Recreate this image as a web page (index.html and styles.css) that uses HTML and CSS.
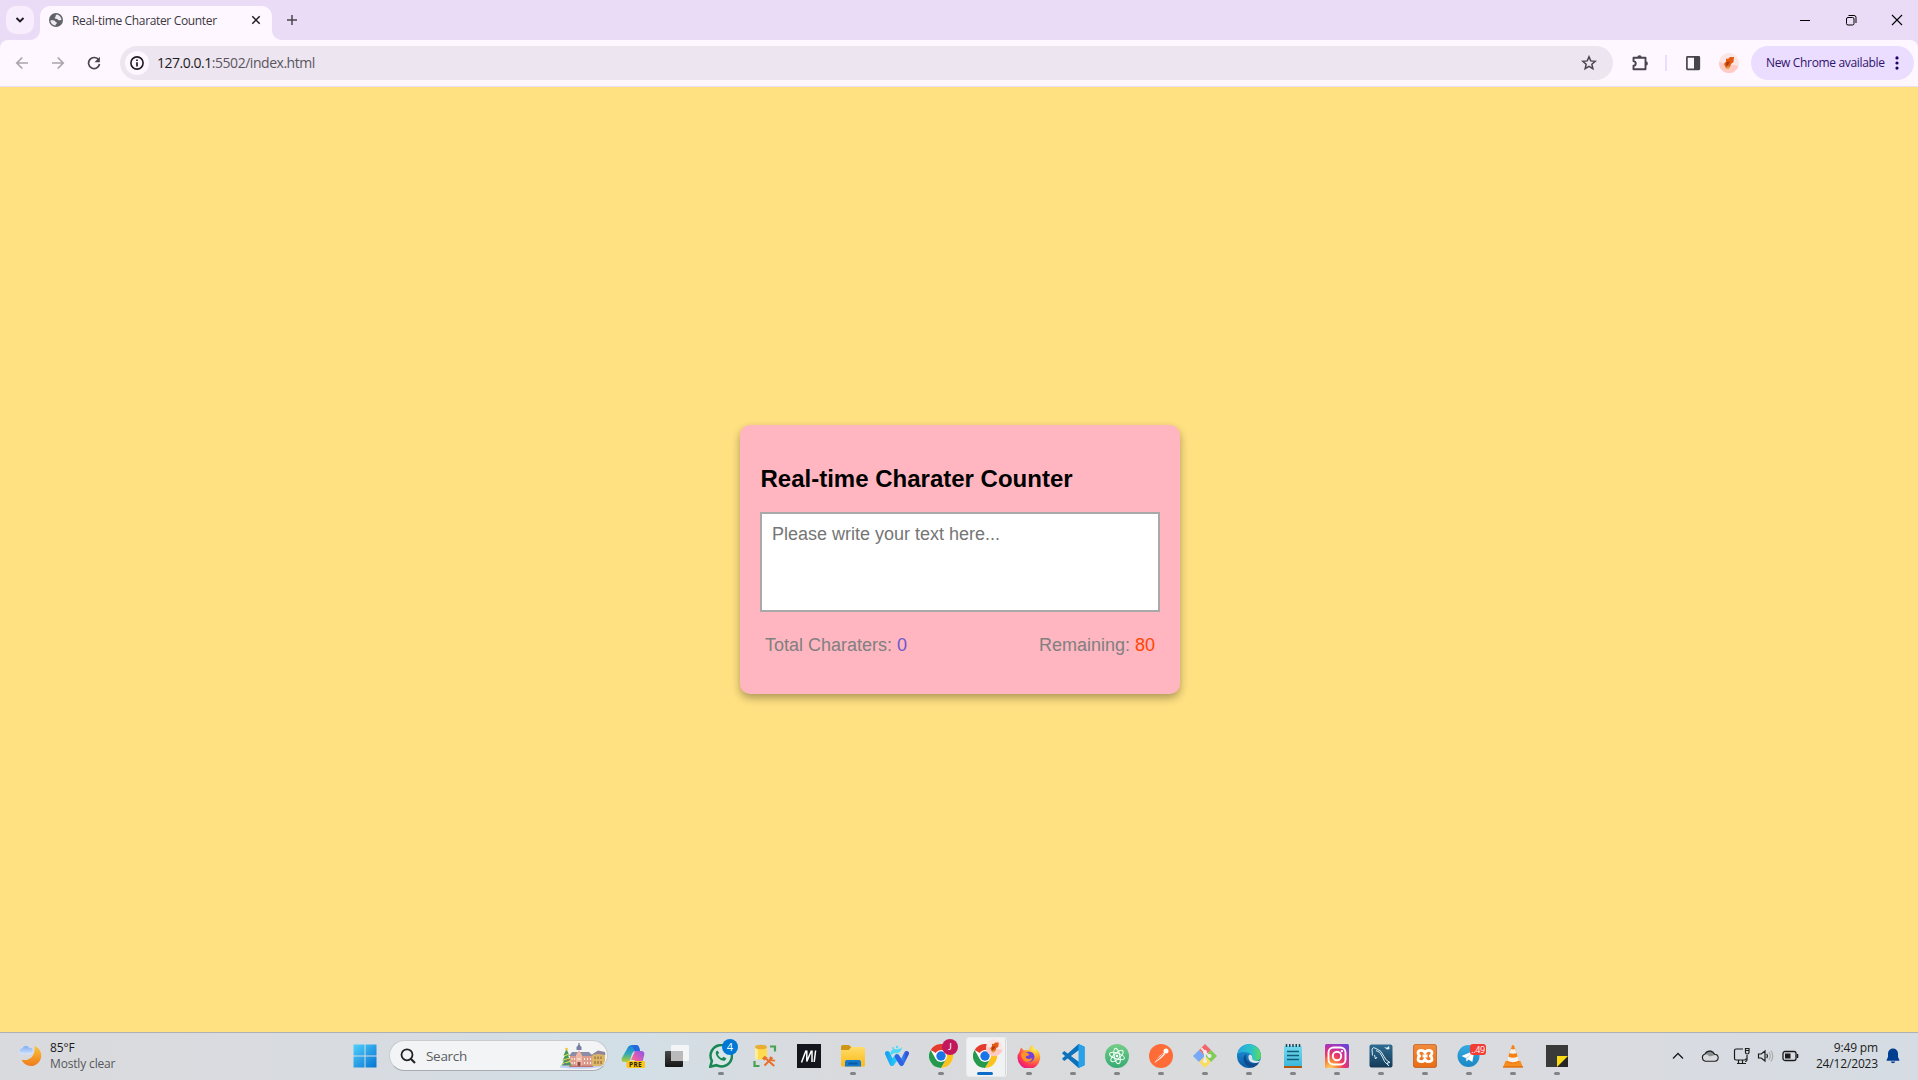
FILE: index.html
```html
<!DOCTYPE html>
<html lang="en">
<head>
<meta charset="utf-8">
<title>Real-time Charater Counter</title>
<link rel="stylesheet" href="styles.css">
</head>
<body>
<svg width="0" height="0" class="defs" aria-hidden="true">
  <defs>
    <linearGradient id="moon" x1="0" y1="0" x2="0" y2="1"><stop offset="0" stop-color="#fcc33c"/><stop offset="1" stop-color="#ee7b1b"/></linearGradient>
    <linearGradient id="cloud" x1="0" y1="0" x2="0" y2="1"><stop offset="0" stop-color="#7fa8ee"/><stop offset="1" stop-color="#cfe2fd"/></linearGradient>
    <linearGradient id="win" x1="0" y1="0" x2="1" y2="1"><stop offset="0" stop-color="#4fd0fb"/><stop offset="1" stop-color="#0673d3"/></linearGradient>
    <linearGradient id="cop1" x1="0" y1="0" x2="0" y2="1"><stop offset="0" stop-color="#1a7fe8"/><stop offset=".5" stop-color="#2fa9b4"/><stop offset="1" stop-color="#b8cf2c"/></linearGradient>
    <linearGradient id="cop2" x1="1" y1="0" x2="0" y2="1"><stop offset="0" stop-color="#8b55e8"/><stop offset=".6" stop-color="#e55fae"/><stop offset="1" stop-color="#fb8f50"/></linearGradient>
    <linearGradient id="dark" x1="0" y1="0" x2="0" y2="1"><stop offset="0" stop-color="#4a4a4a"/><stop offset="1" stop-color="#161616"/></linearGradient>
    <linearGradient id="folder" x1="0" y1="0" x2="0" y2="1"><stop offset="0" stop-color="#ffdc6a"/><stop offset="1" stop-color="#fbb917"/></linearGradient>
    <linearGradient id="wave" x1="0" y1="0" x2="1" y2="0"><stop offset="0" stop-color="#13a5f6"/><stop offset=".5" stop-color="#2ed0f4"/><stop offset="1" stop-color="#3353de"/></linearGradient>
    <radialGradient id="fox" cx=".75" cy=".15" r=".95"><stop offset="0" stop-color="#fff44f"/><stop offset=".4" stop-color="#ffa42b"/><stop offset=".75" stop-color="#ff3b50"/><stop offset="1" stop-color="#e31587"/></radialGradient>
    <linearGradient id="atom" x1="0" y1="0" x2="0" y2="1"><stop offset="0" stop-color="#74cd86"/><stop offset="1" stop-color="#35ab74"/></linearGradient>
    <linearGradient id="edge1" x1="0" y1="0" x2="1" y2="0"><stop offset="0" stop-color="#25a7e0"/><stop offset=".6" stop-color="#2cc3c8"/><stop offset="1" stop-color="#5fdc55"/></linearGradient>
    <linearGradient id="edge2" x1="0" y1="0" x2="0" y2="1"><stop offset="0" stop-color="#1f9de0"/><stop offset="1" stop-color="#0c59a4"/></linearGradient>
    <linearGradient id="note" x1="0" y1="0" x2="0" y2="1"><stop offset="0" stop-color="#75d9ee"/><stop offset="1" stop-color="#3db9dc"/></linearGradient>
    <radialGradient id="insta" cx=".2" cy="1" r="1.15"><stop offset="0" stop-color="#ffd566"/><stop offset=".25" stop-color="#fb8a3a"/><stop offset=".5" stop-color="#ea3a64"/><stop offset=".75" stop-color="#c32fa7"/><stop offset="1" stop-color="#6a45d8"/></radialGradient>
    <linearGradient id="sql" x1="0" y1="0" x2="0" y2="1"><stop offset="0" stop-color="#2f6d93"/><stop offset="1" stop-color="#163a58"/></linearGradient>
    <linearGradient id="xam" x1="0" y1="0" x2="0" y2="1"><stop offset="0" stop-color="#f18a3c"/><stop offset="1" stop-color="#ea6c14"/></linearGradient>
    <linearGradient id="tel" x1="0" y1="0" x2="0" y2="1"><stop offset="0" stop-color="#34aadf"/><stop offset="1" stop-color="#1b87c4"/></linearGradient>
    <symbol id="chrome" viewBox="0 0 24 24">
      <circle cx="12" cy="12" r="12" fill="#fff"/>
      <path d="M12 12 1.6 6A12 12 0 0 1 22.4 6H12z" fill="#e33b2e"/>
      <path d="M22.4 6A12 12 0 0 1 12 24l5.2-9L12 6z" fill="#fcc31e"/>
      <path d="M1.6 6A12 12 0 0 0 12 24l5.2-9L12 12 6.8 15z" fill="#269a4c"/>
      <circle cx="12" cy="12" r="6" fill="#fff"/><circle cx="12" cy="12" r="4.700" fill="#1b73e8"/>
    </symbol>
    <symbol id="avatar" viewBox="0 0 20 20">
      <circle cx="10" cy="10" r="10" fill="#fbe6e6"/>
      <path d="M0 9Q4 10 9 11l10.500 2A10 10 0 0 1 0 9z" fill="#ffc9c4"/>
      <path d="M7 5.500 9 6l2-2h4l-.5 5-2.500 2-1 3-4 1-2-4 2-2.500z" fill="#e55b13"/>
      <path d="m7.500 9 3.500-.5-2 3.500-2 1z" fill="#a83a0c"/><path d="m9 13 2 1-1.500 2-3-.5z" fill="#d9a23a"/>
    </symbol>
  </defs>
</svg>

<div class="screen">
  <header class="tabstrip">
    <div class="tab-search"><svg width="10" height="10" viewBox="0 0 10 10"><path d="m1.500 3 3.500 3.500L8.500 3" fill="none" stroke="#1d1b20" stroke-width="1.900"/></svg></div>
    <div class="tab">
      <svg width="14" height="14" viewBox="0 0 14 14"><circle cx="7" cy="7" r="7" fill="#5f6368"/><path d="M8.200 1.500C5.800 2 7.200 3.800 6 4.600c-1 .8.8 1.600 2.600 1.600.9 1.700 2.200.9 3.900.7-.2-2.600-2-4.800-4.300-5.400z" fill="#f1eaf3"/><path d="M1.400 7.200c2 0 4.100-.3 4.900 1.200.2 1.200 1.600.4 1.700 1.700-.7 1-1.600 1.200-1.500 2.500C3.600 12.300 1.500 10 1.400 7.200z" fill="#f1eaf3"/></svg>
      <span class="tab-title">Real-time Charater Counter</span>
      <svg class="tab-close" width="10" height="10" viewBox="0 0 10 10"><path d="m1.300 1.300 7.400 7.400m0-7.400L1.300 8.700" stroke="#1d1b20" stroke-width="1.500"/></svg>
    </div>
    <svg class="new-tab" width="12" height="12" viewBox="0 0 12 12"><path d="M6 1v10M1 6h10" stroke="#49454f" stroke-width="1.500"/></svg>
    <div class="window-controls">
      <svg width="12" height="12" viewBox="0 0 12 12"><path d="M1 6.500h10" stroke="#000"/></svg>
      <svg width="12" height="12" viewBox="0 0 12 12"><rect x="1.500" y="3.500" width="7.500" height="7.500" rx="1.500" fill="none" stroke="#000"/><path d="M3.500 1.500H9a2 2 0 0 1 2 2V9" fill="none" stroke="#000"/></svg>
      <svg width="12" height="12" viewBox="0 0 12 12"><path d="m1 1 10 10m0-10L1 11" stroke="#000" stroke-width="1.100"/></svg>
    </div>
  </header>

  <nav class="toolbar">
    <svg class="nav" width="14" height="14" viewBox="0 0 14 14"><path d="M13 7H2m5.300-5.500L1.800 7l5.500 5.500" fill="none" stroke="#aaa3ae" stroke-width="1.700"/></svg>
    <svg class="nav" width="14" height="14" viewBox="0 0 14 14"><path d="M1 7h11M6.700 1.500 12.200 7l-5.500 5.500" fill="none" stroke="#aaa3ae" stroke-width="1.700"/></svg>
    <svg class="nav" width="14" height="14" viewBox="0 0 14 14"><path d="M11.700 4A5.500 5.500 0 1 0 12.500 8" fill="none" stroke="#49454f" stroke-width="1.700"/><path d="M12.900.8v5.400H7.500z" fill="#49454f"/></svg>
    <div class="omnibox">
      <span class="site-info"><svg width="14" height="14" viewBox="0 0 14 14"><circle cx="7" cy="7" r="6.100" fill="none" stroke="#1d1b20" stroke-width="1.600"/><path d="M7 6.200v4.200M7 3.400V5" stroke="#1d1b20" stroke-width="1.700"/></svg></span>
      <span class="url"><b>127.0.0.1</b>:5502/index.html</span>
      <svg class="star" width="16" height="16" viewBox="0 0 16 16"><path d="m8 1.800 1.750 4.100 4.450.4-3.350 2.900 1 4.400L8 11.300l-3.850 2.300 1-4.400L1.800 6.300l4.450-.4z" fill="none" stroke="#49454f" stroke-width="1.500"/></svg>
    </div>
    <svg class="ext" width="18" height="18" viewBox="0 0 18 18"><path d="M2.500 3.700h12V15.200h-12v-3.400c3-.6 3-4.200 0-4.700z" fill="none" stroke="#49454f" stroke-width="1.900" stroke-linejoin="round"/><path d="M6.300 3.500a2.200 2.200 0 0 1 4.400 0zM14.700 7.200a2.200 2.200 0 0 1 0 4.400z" fill="#49454f"/></svg>
    <i class="divider"></i>
    <svg class="panel" width="16" height="16" viewBox="0 0 16 16"><rect x="1.900" y="1.900" width="12.400" height="12.400" rx=".6" fill="none" stroke="#49454f" stroke-width="1.700"/><path d="M9 1.500h5.500v13H9z" fill="#49454f"/></svg>
    <svg class="profile" width="20" height="20"><use href="#avatar"/></svg>
    <div class="update"><span>New Chrome available</span><svg width="4" height="14" viewBox="0 0 4 14"><g fill="#21005d"><circle cx="2" cy="1.900" r="1.600"/><circle cx="2" cy="7" r="1.600"/><circle cx="2" cy="12.100" r="1.600"/></g></svg></div>
  </nav>

  <main class="page">
    <section class="container">
      <h2>Real-time Charater Counter</h2>
      <textarea class="textarea" placeholder="Please write your text here..." maxlength="80"></textarea>
      <div class="counter-container">
        <p>Total Charaters: <span class="total-counter">0</span></p>
        <p>Remaining: <span class="remaining-counter">80</span></p>
      </div>
    </section>
  </main>

  <footer class="taskbar">
    <div class="weather">
      <svg width="25" height="24" viewBox="0 0 25 24"><path d="M16.500 2A10.300 10.300 0 1 1 3.500 15.800Q10 17 13.800 13 17.300 9 16.500 2z" fill="url(#moon)"/><path d="M4 10a3 3 0 0 1 .2-6 4 4 0 0 1 7-.6 3.300 3.300 0 0 1 1.300 6.600z" fill="url(#cloud)" stroke="#dbe7fb" stroke-width=".6"/></svg>
      <div class="weather-text"><span>85°F</span><small>Mostly clear</small></div>
    </div>

    <div class="apps">
      <div class="app start"><svg width="24" height="24" viewBox="0 0 24 24"><path d="M.5.500h11v11H.5zm12 0h11v11h-11zM.5 12.500h11v11H.5zm12 0h11v11h-11z" fill="url(#win)"/></svg></div>
      <div class="search">
        <svg width="16" height="16" viewBox="0 0 16 16"><circle cx="7" cy="6.800" r="5.500" fill="none" stroke="#222" stroke-width="1.800"/><path d="m11 11 4 4" stroke="#222" stroke-width="2.100"/></svg>
        <span>Search</span>
        <svg class="town" width="46" height="26" viewBox="0 0 46 26">
          <path d="M0 23q20-4 45-2l-6 3.500Q20 27 0 24.500z" fill="#c3cff2"/>
          <path d="M32 12l7-4 6 2.500V18q-1 3.500-4 5h-9z" fill="#dcb567"/><path d="m31 12 7-4.500 7 1.500.500 3-7.500-1z" fill="#8e8598"/><path d="M35 13.500v2.500m3-2.500v2.500m3-2.500v2.500m-6 2v3m3-3v3m3-3v3" stroke="#8b673b" stroke-width="1.100"/>
          <path d="M10 13h22v10H10z" fill="#dd9a8e"/><path d="m9 13 3-4h17l4 4z" fill="#8d8ca6"/><path d="M16 12l3-5 3 5v11h-6z" fill="#edb6a5"/><path d="M16.500 7V4L19 1.500 21.500 4v3z" fill="#777da7"/><path d="M19 0v3" stroke="#65657f"/>
          <path d="M12 15v2m2.500-2v2m10-2v2m3-2v2m3-2v2M12 19v2m2.500-2v2m10-2v2m3-2v2m3-2v2M18 15v2m2-2v2" stroke="#fff1d8" stroke-width="1.100"/><path d="M17.500 23v-4h3v4z" fill="#8c4c4b"/><path d="M9 23.300h24" stroke="#b95b50"/>
          <path d="m6.500 6 3 6.500H8l2.500 5H9l2.500 5H1.500l2.500-5H2.500l2.500-5H3.500z" fill="#459855"/><path d="M4 13l5-2m-6 6 7-2M2 21l9-3" stroke="#d5df67" stroke-width="1.100"/><circle cx="6.500" cy="6" r="1.300" fill="#f4c332"/><circle cx="8" cy="17" r="1" fill="#de5148"/><circle cx="5" cy="21" r="1" fill="#9154bc"/>
        </svg>
      </div>
      <div class="app first"><svg width="24" height="24" viewBox="0 0 24 24"><path d="M6 5q1.500-4 5-4h4q2.500 0 3.300 3l.7 3h-4q-3 0-4 3l-2 6q-.8 2-3 2H3Q0 18 .8 14z" fill="url(#cop1)"/><path d="M11 1h4q2.500 0 3.300 3l.7 3h-5.500z" fill="#2867df"/><path d="M14 7h6q4 0 3.200 4L22 16q-1 4-4 4h-7q2-1 2.700-4H10z" fill="url(#cop2)"/><rect x="5.500" y="17" width="18.500" height="7" rx="1.500" fill="#fbc816"/><text x="8" y="23.200" class="pre">PRE</text></svg></div>
      <div class="app"><svg width="24" height="24" viewBox="0 0 24 24"><rect y="7" width="18" height="16" rx="1" fill="url(#dark)"/><rect x="6" y="1" width="18" height="16" rx="1" fill="#f9f9f9" opacity=".85"/><path d="M6 7h12v10H6z" fill="#bababa"/></svg></div>
      <div class="app run"><svg width="24" height="24" viewBox="0 0 24 24"><path d="m1.300 22.700 1.600-5.800A10.700 10.700 0 1 1 7.300 21.200z" fill="#d9e6e7" stroke="#198754" stroke-width="2.500"/><path d="M8.500 6.500 7 7.500c-1.500 4 4.500 10.300 9 9l1.500-2-3-1.700-1.400 1.500c-2-.6-3.600-2.200-4.300-4L10.200 9z" fill="#198754"/></svg><span class="badge blue">4</span></div>
      <div class="app"><svg width="24" height="24" viewBox="0 0 24 24"><path d="M2 3v11c0 2 12 2 12 0V3z" fill="#ffdc4f"/><path d="M2 3v11c0 .8 1 1.200 3 1.500V4z" fill="#ffed98"/><ellipse cx="8" cy="3" rx="6" ry="2.300" fill="#e9ad35"/><path d="M17 2.500h5v5M1.500 17v5h5" fill="none" stroke="#48a150" stroke-width="2.200"/><path d="m11.500 21.500 8-8m-8.300-.5 10 9" stroke="#e7702a" stroke-width="2"/><path d="M9 14.500 11.500 12l3 1.500-3 3zM18 12l1 3.500 3.500.5-1 1.500-3.500-.5-2-3z" fill="#e7702a"/></svg></div>
      <div class="app"><svg width="24" height="24" viewBox="0 0 24 24"><path d="M0 0h24v24H0z" fill="#14151d"/><path d="m4.500 18.500 4.500-12M9.800 6.500v11l4.700-11M15 6.500v11.500M18.600 6.500 17.200 18" fill="none" stroke="#fff" stroke-width="1.500"/></svg></div>
      <div class="app run"><svg width="24" height="24" viewBox="0 0 24 24"><path d="M0 3q0-2 2-2h6l2.500 2.500L8 6H0z" fill="#cf9615"/><path d="M0 6h8l2.500-3H22q2 0 2 2v16q0 1.500-1.500 1.500h-21Q0 22.500 0 21z" fill="url(#folder)"/><path d="M4 22.500V18q0-2 2-2h12q2 0 2 2v4.500z" fill="#1579ce"/><path d="M7.500 18.500h9v2h-9z" fill="#0b599f"/></svg></div>
      <div class="app"><svg width="24" height="24" viewBox="0 0 24 24"><path d="m2.500 9.500 4.500 10 5-7 4.500 7 5-10" fill="none" stroke="url(#wave)" stroke-width="5" stroke-linejoin="round" stroke-linecap="round"/><path d="M5 9q3-5 5-4 4 1 7-2-1 7-7 6-2 0-3 2z" fill="#4edaf6"/><path d="m12 12.500 4.500 7" stroke="#2f62e6" stroke-width="4.500" stroke-linecap="round"/><circle cx="12" cy="3" r="1.200" fill="#57d7f7"/><circle cx="8" cy="4" r="1" fill="#57d7f7"/></svg></div>
      <div class="app run"><svg width="24" height="24"><use href="#chrome"/></svg><span class="badge plum">J</span></div>
      <div class="app run active"><svg width="24" height="24"><use href="#chrome"/></svg><svg class="badge-pic" width="17" height="17"><use href="#avatar"/></svg></div>
      <div class="app run"><svg width="24" height="24" viewBox="0 0 24 24"><path d="M2.500 8 4 3.500l3 3Q10 5.500 12 6q.5-3.500 3-5 1 3 4 5l1-.8Q24 10 23 15a11.300 11.300 0 0 1-22.500-1Q.5 10 2.500 8z" fill="url(#fox)"/><path d="M8 9q4-3 8 0 3 4 0 7.500-4 3-8 0-2.500-3-1-5z" fill="#7641d7"/><path d="M4 10q3-3 7-.8l1.500 1.800-4 1.500q.5 3 4 2.500l3-1q-2 5-7 3.500-4-2-4.500-7.500z" fill="#ff9425"/></svg></div>
      <div class="app run"><svg width="24" height="24" viewBox="0 0 24 24"><path d="m17.500 0 6 2.800v18.400l-6 2.800L1 9.200 3.200 7 18 18V6L3.200 17 1 14.800z" fill="#0b71bb"/><path d="m17.500 0 6 2.800v18.400l-6 2.800z" fill="#29a2eb"/></svg></div>
      <div class="app run"><svg width="24" height="24" viewBox="0 0 24 24"><circle cx="12" cy="12" r="12" fill="url(#atom)"/><g fill="none" stroke="#f3fff4" stroke-width="1.100"><ellipse cx="12" cy="12" rx="2.800" ry="7.800" transform="rotate(-12 12 12)"/><ellipse cx="12" cy="12" rx="2.800" ry="7.800" transform="rotate(48 12 12)"/><ellipse cx="12" cy="12" rx="2.800" ry="7.800" transform="rotate(108 12 12)"/></g><circle cx="12" cy="12" r="1.300" fill="#fff"/></svg></div>
      <div class="app run"><svg width="24" height="24" viewBox="0 0 24 24"><circle cx="12" cy="12" r="12" fill="#ff6c37"/><path d="m5.500 18.500 5.500-7 4-3 1.500 1.500-4 4-6.500 4.800z" fill="#ffe6db"/><circle cx="17" cy="7" r="2.500" fill="#fff"/><path d="m8 16 6-6" stroke="#ff6c37" stroke-width=".8"/></svg></div>
      <div class="app run"><svg width="24" height="24" viewBox="0 0 24 24"><path d="m12 0 6 6-6 6-6-6z" fill="#f0686c"/><path d="m6 6 6 6-6 6-6-6z" fill="#78a9f7"/><path d="m18 6 6 6-6 6-6-6z" fill="#82cb58"/><path d="m12 12 6 6-6 6-6-6z" fill="#fcdc60"/><path d="m8 4 4 4v9m0-9 4 4" fill="none" stroke="#e9e5e5" stroke-width="2"/><g fill="#eee"><circle cx="12" cy="8" r="2"/><circle cx="12" cy="17" r="2"/><circle cx="16.500" cy="12" r="2"/></g></svg></div>
      <div class="app run"><svg width="24" height="24" viewBox="0 0 24 24"><circle cx="12" cy="12" r="12" fill="url(#edge2)"/><path d="M.3 10A12 12 0 0 1 24 11q0 6-6 6-4 0-3.500-3Q16 9 9 8.200 3 7.500.3 10z" fill="url(#edge1)"/><path d="M9.500 9.500Q5 13 7.500 18.500q3 5 9 4.700 4-1.500 5.800-5.200-6 3-10 .5-5-3-2.800-9z" fill="#114a8b"/><path d="M11.500 12Q11 16 14 18q4 1.700 8 .2l1.500-2q-3 1.300-5.500.6-3.500-.9-2.800-3Q15 10.500 12.500 10.500z" fill="#dbe3ec"/></svg></div>
      <div class="app run"><svg width="24" height="24" viewBox="0 0 24 24"><path d="M3 21h18v3H3z" fill="#b1580e"/><path d="M3 2.500Q3 2 4 2h16q1 0 1 1v19H3z" fill="url(#note)"/><path d="M6 7.500h12M6 11.500h12M6 15.500h12" stroke="#145d78" stroke-width="1.400"/><path d="M5.500 0v3m3.250-3v3M12 0v3m3.250-3v3m3.250-3v3" stroke="#15475a" stroke-width="1.500"/></svg></div>
      <div class="app run"><svg width="24" height="24" viewBox="0 0 24 24"><rect width="24" height="24" rx="1.500" fill="url(#insta)"/><g fill="none" stroke="#fff" stroke-width="1.900"><rect x="3.500" y="3.500" width="17" height="17" rx="5"/><circle cx="12" cy="12" r="4.200"/></g><circle cx="16.900" cy="7.100" r="1.200" fill="#fff"/></svg></div>
      <div class="app run"><svg width="24" height="24" viewBox="0 0 24 24"><rect x=".5" y=".5" width="23" height="23" rx="2" fill="url(#sql)"/><path d="M3.500 11.500 3 5q1-2.500 4-.5 6 2 8 8 1.500 4 6 6l-3 .5q.5 1.500 2 3-5.500-4-6.500-9Q11 7 7 6.500M5.500 11l1 4 1.500-2" fill="none" stroke="#d9edf5" stroke-width="1"/><path d="m15 3 3 .7L20 2l.5 3-2.500.5z" fill="#e8f7fc"/></svg></div>
      <div class="app run"><svg width="24" height="24" viewBox="0 0 24 24"><rect x=".4" y=".4" width="23.200" height="23.200" rx="2.500" fill="url(#xam)" stroke="#bb5b1c" stroke-width=".8"/><path d="M12 9Q11 6.300 8.500 6.300 5 6.300 5 9q0 2 1.700 3Q5 13 5 15q0 2.700 3.500 2.700 2.500 0 3.500-2.700 1 2.700 3.500 2.700Q19 17.700 19 15q0-2-1.700-3Q19 11 19 9q0-2.700-3.500-2.700Q13 6.300 12 9zM9.500 12h5" fill="none" stroke="#fff" stroke-width="2.800" stroke-linejoin="round"/></svg></div>
      <div class="app run"><svg width="24" height="24" viewBox="0 0 24 24"><circle cx="11.500" cy="12" r="11" fill="url(#tel)"/><path d="m4.500 12 13-5.500L15.300 18l-3.800-2.500-2 2-.7-3.500z" fill="#fff"/><path d="m8.800 14 6-5-4.300 5-.7 2.500z" fill="#bcd8e8"/></svg><span class="badge red">..49</span></div>
      <div class="app run"><svg width="24" height="24" viewBox="0 0 24 24"><path d="M4.500 17 2 23.500h20L19.500 17z" fill="#f78c1f"/><path d="M11 1.500q1-1 2 0L18.500 18q-6.500 4-13 0z" fill="#f58216"/><path d="m10 5-1.500 4q3.500 1.500 7 0L14 5q-2 .8-4 0zM7.200 12.500l-1.200 4q6 3.500 12 0l-1.200-4q-4.800 2.500-9.600 0z" fill="#f4f2ef"/><path d="M2 22.300h20v1.200H2z" fill="#d96d11"/></svg></div>
      <div class="app run"><svg width="24" height="24" viewBox="0 0 24 24"><path d="M1 1h22v22H1z" fill="#3a3a3a"/><path d="M12 12h11v11H12z" fill="#262626"/><path d="M12 12h11L12 23z" fill="#fadb16"/></svg></div>
    </div>

    <div class="tray">
      <svg class="chevron" width="12" height="8" viewBox="0 0 12 8"><path d="m1 6.500 5-5 5 5" fill="none" stroke="#1b1b1b" stroke-width="1.300"/></svg>
      <svg class="onedrive" width="18" height="14" viewBox="0 0 18 14"><path d="M4.500 12.200A3.700 3.700 0 0 1 4 5a5.300 5.300 0 0 1 9.500.2 3.500 3.500 0 0 1 .3 7z" fill="#d9dadd"/><path d="M4 5q2-4 6.500-3.300Q13 2.500 14 6L9 7.500Q6 5 4 5z" fill="#8d8e91"/><path d="M4.500 12.200A3.700 3.700 0 0 1 4 5a5.300 5.300 0 0 1 9.500.2 3.500 3.500 0 0 1 .3 7z" fill="none" stroke="#202020" stroke-width="1.100"/></svg>
      <svg class="network" width="18" height="18" viewBox="0 0 18 18"><path d="M10 2H3q-1.500 0-1.500 1.500v8Q1.500 13 3 13h8.500q1.500 0 1.500-1.500M5.500 13v3.500m4-3.500v3.500M4 16.500h9M14 8v5q0 1.500-2 1.500M12.500 1.500v4q0 1.500 1.700 1.500T16 5.500v-4zM12 3.500h4" fill="none" stroke="#1b1b1b" stroke-width="1.200"/></svg>
      <svg class="sound" width="18" height="14" viewBox="0 0 18 14"><path d="M1.500 5v4h2.700L8 12V2L4.200 5zM9.700 4.800q1.600 2.200 0 4.400" fill="none" stroke="#1b1b1b" stroke-width="1.200"/><path d="M11.800 3q3 4 0 8m2-9.500q4 5.500 0 11" fill="none" stroke="#a8aaae" stroke-width="1.200"/></svg>
      <svg class="battery" width="17" height="12" viewBox="0 0 17 12"><rect x="1" y="1.500" width="13" height="9" rx="2" fill="none" stroke="#1b1b1b" stroke-width="1.300"/><path d="M3 3.500h5.500v5H3z" fill="#1b1b1b"/><path d="M15.500 4v4" stroke="#1b1b1b" stroke-width="1.600"/></svg>
      <div class="clock"><span>9:49 pm</span><span>24/12/2023</span></div>
      <svg class="bell" width="14" height="16" viewBox="0 0 14 16"><path d="M7 .5A5 5 0 0 1 12 5.500V9l1.400 3v.7H.6V12L2 9V5.500A5 5 0 0 1 7 .5zM4.700 13.500h4.600a2.400 2.400 0 0 1-4.600 0z" fill="#003e92"/></svg>
    </div>
  </footer>
</div>
</body>
</html>
```

FILE: styles.css
```css
* { box-sizing: border-box; }
body { margin: 0; }
svg { display: block; flex: none; }
.defs { position: absolute; }
.screen {
  width: 1918px; height: 1080px;
  display: flex; flex-direction: column;
  overflow: hidden;
  background: #eadcf6;
  font-family: "Open Sans", "Noto Sans", sans-serif;
}

/* Tab strip */
.tabstrip { height: 40px; display: flex; align-items: center; padding-left: 6px; background: #eadcf6; }
.tab-search { width: 28px; height: 28px; border-radius: 10px; background: #f7edfd; display: grid; place-items: center; }
.tab {
  position: relative; align-self: flex-end;
  width: 232px; height: 34px; margin-left: 6px; padding: 0 11px 6px 9px;
  display: flex; align-items: center;
  background: #fef7ff; border-radius: 10px 10px 0 0;
}
.tab::before, .tab::after { content: ""; position: absolute; bottom: 0; width: 10px; height: 10px; }
.tab::before { left: -10px; background: radial-gradient(circle at 0 0, transparent 9.5px, #fef7ff 10.5px); }
.tab::after { right: -10px; background: radial-gradient(circle at 100% 0, transparent 9.5px, #fef7ff 10.5px); }
.tab-title { margin-left: 9px; font-size: 12px; letter-spacing: -.34px; color: #3a3740; white-space: nowrap; }
.tab-close { margin-left: auto; }
.new-tab { margin-left: 14px; }
.window-controls { margin-left: auto; display: flex; gap: 34px; padding-right: 15px; }

/* Toolbar */
.toolbar {
  height: 47px; display: flex; align-items: center; padding: 0 4px 1px 15px;
  background: #fef7ff; border-bottom: 1px solid #e9dff0; border-radius: 8px 8px 0 0;
}
.nav { margin-right: 22px; }
.omnibox {
  width: 1493px; height: 34px; margin-left: -3px; padding: 0 16px 0 5px;
  display: flex; align-items: center; background: #ede6f0; border-radius: 17px;
}
.site-info { width: 24px; height: 24px; border-radius: 50%; background: #fef7ff; display: grid; place-items: center; }
.url { margin-left: 8px; font-size: 14px; letter-spacing: -.47px; color: #5b5660; white-space: nowrap; }
.url b { font-weight: 400; color: #1d1b20; }
.star { margin-left: auto; }
.ext { margin-left: 18px; }
.divider { width: 2px; height: 16px; margin-left: 16px; background: #eaddff; }
.panel { margin-left: 18px; }
.profile { margin-left: 18px; }
.update {
  width: 163px; height: 34px; margin-left: auto; padding: 0 15px;
  display: flex; align-items: center; justify-content: space-between;
  border-radius: 17px; background: #eaddff;
  font-size: 12px; letter-spacing: -.34px; color: #30136a; white-space: nowrap;
}

/* Page */
.page { flex: 1; display: flex; align-items: center; justify-content: center; padding-left: 2px; background: #ffe182; font-family: Arial, "Liberation Sans", sans-serif; }
.container { width: 440px; height: 269px; padding: 20px; border-radius: 10px; background: lightpink; box-shadow: 0 4px 8px rgba(0, 0, 0, .32); }
.container h2 { margin: 20px 0; padding-left: .5px; font-size: 24px; line-height: 27px; }
.textarea {
  display: block; width: 100%; height: 100px; padding: 10px;
  border: 2px solid darkgray; border-radius: 0; background: #fff;
  font: 18px Arial, "Liberation Sans", sans-serif; resize: none; outline: none;
}
.counter-container { display: flex; justify-content: space-between; padding: 5px 5px 0; }
.counter-container p { margin: 18px 0; font-size: 18px; line-height: 20px; color: gray; }
.total-counter { color: slateblue; }
.remaining-counter { color: orangered; }

/* Taskbar */
.taskbar {
  height: 48px; display: flex; align-items: center; padding-bottom: 2px;
  border-top: 1px solid #aeb0b3;
  background: linear-gradient(90deg, #d9dadd 0%, #d8dbe0 18%, #d2dfe7 32%, #d9dadd 44%, #dadbdd 62%, #dadbe0 82%, #d5dce3 100%);
}
.weather { width: 343px; display: flex; align-items: center; padding-left: 18px; }
.weather-text { margin-left: 7px; display: flex; flex-direction: column; font-size: 12px; line-height: 16px; letter-spacing: -.16px; color: #1b1b1b; }
.weather-text small { font-size: 12px; color: #56575a; }
.apps { display: flex; align-items: center; }
.app { position: relative; width: 44px; height: 40px; display: grid; place-items: center; }
.app > svg { grid-area: 1 / 1; }
.first { margin-left: 3px; }
.start { margin-right: 2px; }
.run::after { content: ""; position: absolute; left: 19px; top: 36px; width: 6px; height: 3px; border-radius: 2px; background: #818386; }
.active::before { content: ""; position: absolute; left: 3px; top: 1px; width: 38px; height: 38px; border: 1px solid #e9eaec; border-right: 3px double #d5d6d8; border-radius: 4px; background: #f1f2f3; }
.active > svg { position: relative; }
.run.active::after { left: 14px; width: 16px; background: #0f6cc6; }
.badge { position: absolute; display: grid; place-items: center; color: #fff; line-height: 1; }
.blue { left: 23px; top: 3px; width: 16px; height: 16px; border-radius: 50%; background: #0078d4; font-size: 11px; }
.plum { left: 23px; top: 3px; width: 16px; height: 16px; border-radius: 50%; background: #c2185b; font: 9px/1 "Noto Sans", sans-serif; font-family: Lato, sans-serif; }
.red { left: 23px; top: 8px; width: 16px; height: 11px; border-radius: 3px; background: #f23c34; font-size: 9px; letter-spacing: -.4px; }
.app > .badge-pic { position: absolute; left: 23px; top: 3px; }
.pre { font: 700 6.5px "Open Sans", sans-serif; fill: #2b2100; letter-spacing: .3px; }
.search {
  width: 219px; height: 31px; padding: 0 1px 0 10px;
  display: flex; align-items: center;
  background: #f2f4f6; border: 1px solid #c8cbd0; border-bottom-color: #a9adb3; border-radius: 16px;
  font-size: 13.5px; letter-spacing: -.3px; color: #5c5d5f;
}
.search span { margin-left: 10px; }
.town { margin-left: auto; }
.tray { margin-left: auto; display: flex; align-items: center; padding-right: 18px; }
.onedrive { margin-left: 17px; }
.network { margin-left: 14px; }
.sound { margin-left: 6px; }
.battery { margin-left: 7px; }
.clock { width: 79px; display: flex; flex-direction: column; align-items: flex-end; font-size: 12px; line-height: 16px; letter-spacing: -.16px; color: #1b1b1b; }
.bell { margin-left: 8px; }
```
